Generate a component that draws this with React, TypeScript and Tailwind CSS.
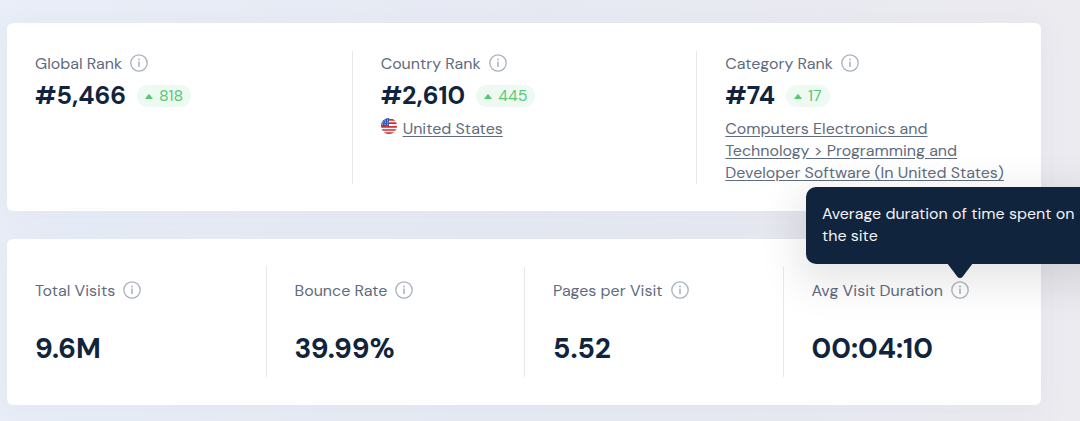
import type { ReactNode } from "react";

interface Rank {
  label: string;
  value: string;
  change: string;
  link?: string;
  flag?: boolean;
}

interface Metric {
  label: string;
  value: string;
  tooltip?: string;
}

const ranks: Rank[] = [
  { label: "Global Rank", value: "#5,466", change: "818" },
  { label: "Country Rank", value: "#2,610", change: "445", link: "United States", flag: true },
  {
    label: "Category Rank",
    value: "#74",
    change: "17",
    link: "Computers Electronics and Technology > Programming and Developer Software (In United States)",
  },
];

const metrics: Metric[] = [
  { label: "Total Visits", value: "9.6M" },
  { label: "Bounce Rate", value: "39.99%" },
  { label: "Pages per Visit", value: "5.52" },
  {
    label: "Avg Visit Duration",
    value: "00:04:10",
    tooltip: "Average duration of time spent on the site",
  },
];

function InfoIcon() {
  return (
    <svg width="18" height="18" viewBox="0 0 18 18" fill="none" className="block">
      <circle cx="9" cy="9" r="8.2" stroke="#a9b1bc" strokeWidth="1.3" />
      <circle cx="9" cy="5.5" r="0.9" fill="#a9b1bc" />
      <path d="M9 7.6V13" stroke="#a9b1bc" strokeWidth="1.5" />
    </svg>
  );
}

function UsFlag() {
  return (
    <svg width="16" height="16" viewBox="0 0 16 16" className="shrink-0">
      <clipPath id="flag-round">
        <circle cx="8" cy="8" r="8" />
      </clipPath>
      <g clipPath="url(#flag-round)">
        <rect width="16" height="16" fill="#f5f5f5" />
        <path d="M8 1.8h8M8 5.1h8M0 8.9h16M0 12h16M0 15.2h16" stroke="#d22f35" strokeWidth="1.7" />
        <rect width="8" height="8" fill="#2f5bb5" />
        <path
          d="M3.5 2.2h1M6 2.2h1M1.5 4.2h1M4 4.2h1M6.3 4.2h1M1 6.3h1M3.5 6.3h1M6 6.3h1"
          stroke="#c9d6f0"
          strokeWidth="0.9"
        />
      </g>
    </svg>
  );
}

function Tooltip({ text }: { text: string }) {
  return (
    <div
      role="tooltip"
      className="absolute bottom-full left-1/2 z-10 mb-[17px] w-[308px] -translate-x-1/2 rounded-[10px] bg-[#11243d] px-4 pt-4 pb-[17px] text-base leading-[22px] whitespace-normal text-[#f1f3f6] shadow-[0_12px_40px_8px_rgba(0,0,0,0.1)]"
    >
      {text}
      <svg
        width="26"
        height="16"
        viewBox="0 0 26 16"
        className="absolute top-full left-1/2 -mt-px -translate-x-1/2"
      >
        <path d="M0 0h26L16 13.2Q13 17 10 13.2Z" fill="#11243d" />
      </svg>
    </div>
  );
}

function Label({ text, tooltip }: { text: string; tooltip?: string }) {
  return (
    <div className="flex h-6 items-center gap-2 text-base whitespace-nowrap text-[#5f6c7d]">
      <span className="pt-px">{text}</span>
      <div className="relative">
        <button type="button" aria-label={`About ${text}`} className="block">
          <InfoIcon />
        </button>
        {tooltip && <Tooltip text={tooltip} />}
      </div>
    </div>
  );
}

function ChangeBadge({ value }: { value: string }) {
  return (
    <span className="flex h-[22px] items-center gap-1.5 rounded-full bg-[#edf9f1] px-2 text-base text-[#58c978]">
      <svg width="8" height="5" viewBox="0 0 8 5">
        <path d="M0 5L3.3 0.6Q4 -0.2 4.7 0.6L8 5Z" fill="#58c978" />
      </svg>
      {value}
    </span>
  );
}

function Card({ className, children }: { className: string; children: ReactNode }) {
  return (
    <section
      className={`grid rounded-md bg-white pt-7 shadow-[0_4px_28px_rgba(190,196,215,0.18)] ${className}`}
    >
      {children}
    </section>
  );
}

export default function App() {
  return (
    <main className="flex min-h-screen flex-col gap-7 overflow-hidden bg-linear-to-r from-[#e9eef8] via-[#e7eaf3] to-[#ecebf0] pt-[23px] pr-[39px] pb-4 pl-[7px] font-['DM_Sans','Inter',sans-serif]">
      <Card className="grid-cols-3 pb-[27px]">
        {ranks.map((rank) => (
          <div key={rank.label} className="border-l border-[#e6e8ec] px-7 first:border-l-0">
            <Label text={rank.label} />
            <div className="mt-[5px] flex h-8 items-center gap-[11px]">
              <strong className="text-[25px] leading-8 font-bold text-[#11243d]">{rank.value}</strong>
              <ChangeBadge value={rank.change} />
            </div>
            {rank.link && (
              <div className="mt-1.5 flex gap-1.5 text-base leading-[22px]">
                {rank.flag && <UsFlag />}
                <a href="#" className="text-[#5f6c7d] underline underline-offset-2">
                  {rank.link}
                </a>
              </div>
            )}
          </div>
        ))}
      </Card>

      <Card className="grid-cols-4 pb-7">
        {metrics.map((metric) => (
          <div
            key={metric.label}
            className="border-l border-[#e6e8ec] pt-[11px] pb-2.5 pl-7 first:border-l-0"
          >
            <Label text={metric.label} tooltip={metric.tooltip} />
            <strong className="mt-[29px] block text-[28px] leading-9 font-bold text-[#11243d]">
              {metric.value}
            </strong>
          </div>
        ))}
      </Card>
    </main>
  );
}
